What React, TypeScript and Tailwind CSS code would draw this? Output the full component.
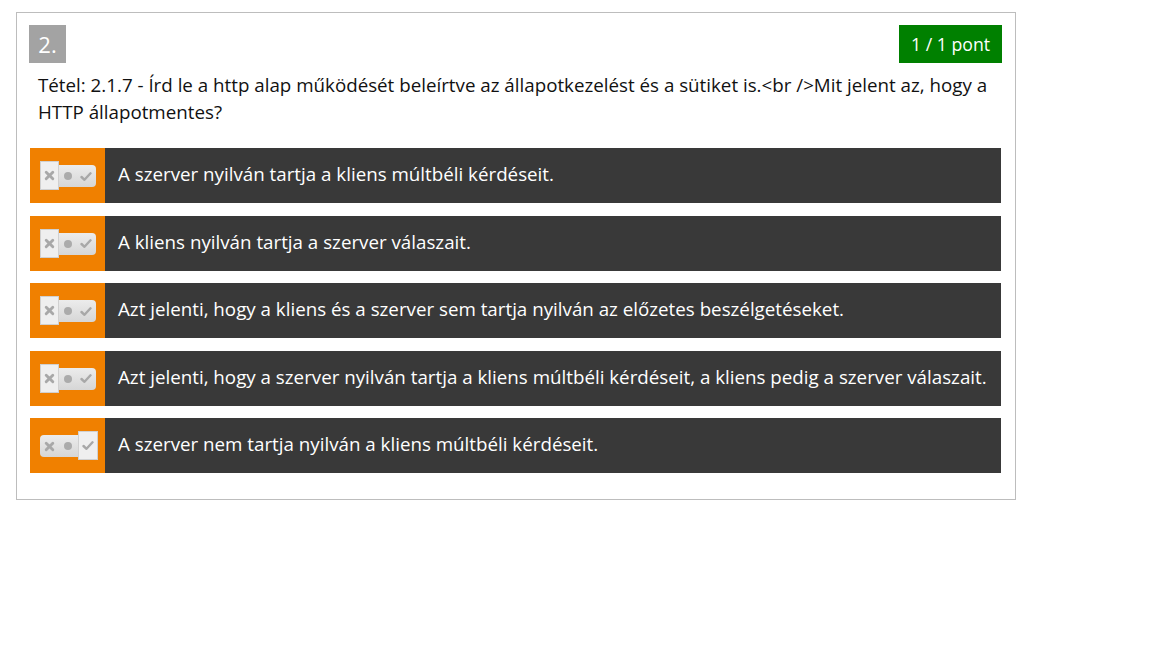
import React from "react";

const answers: { text: string; sel: "x" | "check" }[] = [
  { text: "A szerver nyilván tartja a kliens múltbéli kérdéseit.", sel: "x" },
  { text: "A kliens nyilván tartja a szerver válaszait.", sel: "x" },
  { text: "Azt jelenti, hogy a kliens és a szerver sem tartja nyilván az előzetes beszélgetéseket.", sel: "x" },
  { text: "Azt jelenti, hogy a szerver nyilván tartja a kliens múltbéli kérdéseit, a kliens pedig a szerver válaszait.", sel: "x" },
  { text: "A szerver nem tartja nyilván a kliens múltbéli kérdéseit.", sel: "check" },
];

function XIcon() {
  return (
    <svg width="11" height="11" viewBox="0 0 10 10">
      <path d="M2 2 L8 8 M8 2 L2 8" stroke="#a8a8a8" strokeWidth="2.6" strokeLinecap="round" />
    </svg>
  );
}
function Dot() {
  return (
    <svg width="10" height="10" viewBox="0 0 10 10">
      <circle cx="5" cy="5" r="4" fill="#ababab" />
    </svg>
  );
}
function Check() {
  return (
    <svg width="12" height="11" viewBox="0 0 12 10">
      <path d="M1.5 5.5 L4.5 8.3 L10.5 1.8" stroke="#a8a8a8" strokeWidth="2.4" fill="none" strokeLinecap="round" strokeLinejoin="round" />
    </svg>
  );
}

function Toggle({ sel }: { sel: "x" | "check" }) {
  return (
    <div className="relative w-[56px] h-[22px] rounded-[4px] bg-gradient-to-b from-[#ececec] to-[#d6d6d6] flex items-center">
      <div className="w-[19px] flex justify-center"><XIcon /></div>
      <div className="flex-1 flex justify-center"><Dot /></div>
      <div className="w-[19px] flex justify-center"><Check /></div>
      {sel === "x" ? (
        <div className="absolute left-0 top-[-4px] w-[19px] h-[29px] border border-[#d0d0d0] bg-[#efefef] flex items-center justify-center">
          <XIcon />
        </div>
      ) : (
        <div className="absolute right-[-2px] top-[-4px] w-[20px] h-[29px] border border-[#d0d0d0] bg-[#efefef] flex items-center justify-center">
          <Check />
        </div>
      )}
    </div>
  );
}

export default function App() {
  return (
    <div className="bg-white min-h-[648px] pt-[12px] pl-[16px]" style={{ fontFamily: '"Open Sans", sans-serif' }}>
      <div className="w-[1000px] border border-[#bdbdbd] pl-[13px] pr-[14px] pt-[12px] pb-[26px]">
        <div className="flex justify-between items-start">
          <div className="w-[37px] h-[38px] bg-[#a3a3a3] text-white text-[22px] flex items-center justify-center -ml-[1px]">2.</div>
          <div className="w-[103px] h-[38px] bg-[#008000] text-white text-[17.7px] flex items-center justify-center mr-[-1px]">1 / 1 pont</div>
        </div>
        <div className="pl-[8px] pt-[8px] text-[18.75px] leading-[27px] text-[#111] pr-[6px]">
          Tétel: 2.1.7 - Írd le a http alap működését beleírtve az állapotkezelést és a sütiket is.&lt;br /&gt;Mit jelent az, hogy a HTTP állapotmentes?
        </div>
        <div className="mt-[23px] flex flex-col gap-[12.5px]">
          {answers.map((a, i) => (
            <div key={i} className="flex h-[55px]">
              <div className="w-[75px] bg-[#f08000] flex items-center justify-center pt-[1px]">
                <Toggle sel={a.sel} />
              </div>
              <div className="flex-1 bg-[#393939] text-white text-[18.75px] flex items-center pl-[13px] pb-[2px]">{a.text}</div>
            </div>
          ))}
        </div>
      </div>
    </div>
  );
}
